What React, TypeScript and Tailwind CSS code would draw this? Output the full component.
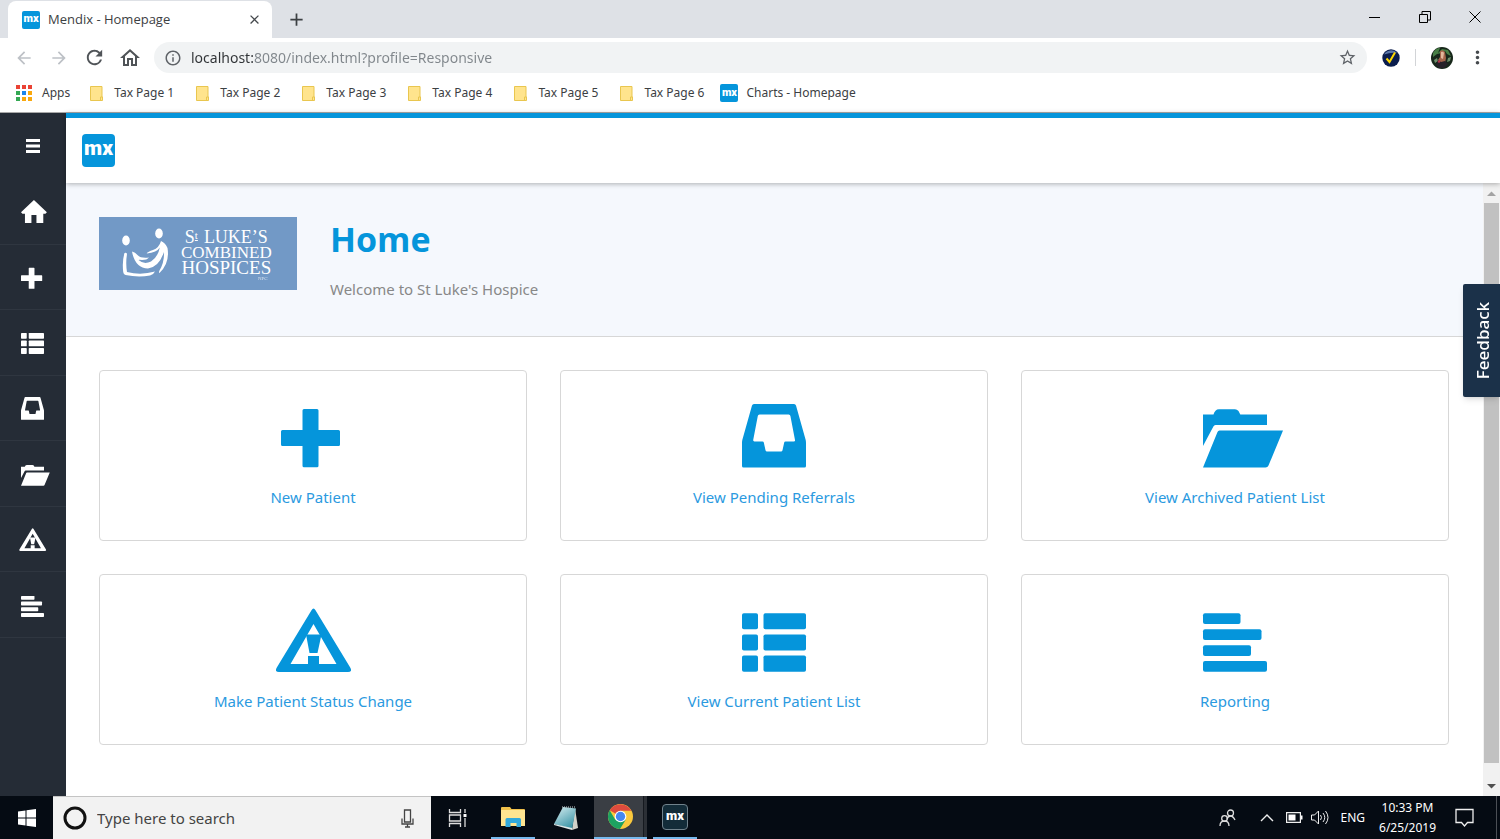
import type { ReactNode } from "react";
import {
  MdAdd,
  MdArrowBack,
  MdArrowForward,
  MdClose,
  MdInfoOutline,
  MdMoreVert,
  MdOutlineHome,
  MdRefresh,
  MdStarBorder,
} from "react-icons/md";

type GlyphName = "home" | "plus" | "list" | "inbox" | "folder" | "warning" | "report";

const glyphs: Record<GlyphName, ReactNode> = {
  home: <path d="M36 0 L72 34 L68 38 H62 V64 H43 V42 H29 V64 H11 V38 H4 L0 34 Z" />,
  plus: (
    <path d="M23 5h13q1.500 0 1.500 1.500V26H57.500q1.500 0 1.500 1.500v13q0 1.500-1.500 1.500H37.500v19.800q0 1.500-1.500 1.500H23q-1.500 0-1.500-1.500V42H1.500Q0 42 0 40.500v-13Q0 26 1.500 26h20V6.500Q21.500 5 23 5z" />
  ),
  list: (
    <>
      <rect x="0" y="5.300" width="16" height="16" rx="1.800" />
      <rect x="21.500" y="5.300" width="42.500" height="16" rx="1.800" />
      <rect x="0" y="26.400" width="16" height="16.200" rx="1.800" />
      <rect x="21.500" y="26.400" width="42.500" height="16.200" rx="1.800" />
      <rect x="0" y="47.500" width="16" height="16.200" rx="1.800" />
      <rect x="21.500" y="47.500" width="42.500" height="16.200" rx="1.800" />
    </>
  ),
  inbox: (
    <path
      fillRule="evenodd"
      d="M12 0H52Q53.500 0 54 1.500L63.700 36Q64 37.500 64 39V62Q64 63.500 62.500 63.500H1.500Q0 63.500 0 62V39Q0 37.500 .3 36L10 1.500Q10.500 0 12 0zM17.500 10.500Q16 10.500 15.800 12L11.200 36Q11 37.400 12.400 37.400H20.500Q21.600 37.400 21.800 38.500L23.500 46.300Q23.800 47.500 25 47.500H39Q40.200 47.500 40.500 46.300L42.200 38.500Q42.400 37.400 43.500 37.400H51.800Q53.300 37.400 53 36L48.400 12Q48.200 10.500 46.700 10.500z"
    />
  ),
  folder: (
    <>
      <path d="M0 10.500H10.500Q11 8.500 12.500 6.700Q14 5.300 16 5.300H32Q34 5.300 35.500 7L37.300 10.500H64V21H12.500Q11 21 10.400 22.500L0 42z" />
      <path d="M16.500 26.500H80L65.500 61.500Q64.700 63.500 62.500 63.500H0L14.500 28Q15 26.500 16.500 26.500z" />
    </>
  ),
  warning: (
    <>
      <path
        fillRule="evenodd"
        d="M30.500 2.200Q32.500-1.200 34.500 2.200L69.500 60Q71.500 64 67 64H-2Q-6.500 64-4.500 60zM32.500 16L9.500 56H55.500z"
      />
      <path d="M25 26.500H40.500L36.500 45H28.500z" />
      <rect x="27" y="48" width="11" height="11" />
    </>
  ),
  report: (
    <>
      <rect x="0" y="5.300" width="37.500" height="10.800" rx="2" />
      <rect x="0" y="21.200" width="58.500" height="10.800" rx="2" />
      <rect x="0" y="37.200" width="48" height="10.800" rx="2" />
      <rect x="0" y="53" width="64" height="10.800" rx="2" />
    </>
  ),
};

function Glyph({ name, className }: { name: GlyphName; className: string }) {
  return (
    <svg viewBox="0 0 64 64" fill="currentColor" aria-hidden="true" className={`overflow-visible ${className}`}>
      {glyphs[name]}
    </svg>
  );
}

function MxBadge({ className }: { className: string }) {
  return (
    <span
      className={`flex shrink-0 items-center justify-center bg-[#0595db] font-['Roboto',sans-serif] leading-none font-black text-white ${className}`}
    >
      mx
    </span>
  );
}

function TabStrip() {
  return (
    <header className="flex h-[38px] items-end bg-[#dee1e6] pl-2">
      <div className="flex h-[37px] w-[264px] items-center rounded-t-lg bg-white pr-2.5 pl-3.5">
        <MxBadge className="size-[18px] rounded-xs pb-0.5 text-[11px]" />
        <span className="ml-2 flex-1 font-['Open_Sans',sans-serif] text-[13px] text-[#3c4043]">Mendix - Homepage</span>
        <button aria-label="Close tab" className="text-[#45494d]">
          <MdClose size={15} />
        </button>
      </div>
      <button aria-label="New tab" className="ml-3.5 flex h-[37px] items-center text-[#3c4043]">
        <MdAdd size={21} />
      </button>
      <div className="ml-auto flex h-[33px] self-start text-black">
        <button aria-label="Minimize" className="flex w-[50px] items-center justify-center">
          <svg width="12" height="12" stroke="currentColor"><path d="M0 6.500h11" /></svg>
        </button>
        <button aria-label="Restore" className="flex w-[50px] items-center justify-center">
          <svg width="12" height="12" fill="none" stroke="currentColor">
            <path d="M.5 3.500h8v8h-8zM3 3V.5h8.500v8.500H9" />
          </svg>
        </button>
        <button aria-label="Close window" className="flex w-[50px] items-center justify-center">
          <svg width="12" height="12" stroke="currentColor"><path d="M.5.5l11 11M11.500.5l-11 11" /></svg>
        </button>
      </div>
    </header>
  );
}

function Toolbar() {
  return (
    <div className="flex h-[39px] items-center bg-white pl-3.5">
      <button aria-label="Back" className="mr-[15px] text-[#bdc1c6]"><MdArrowBack size={20} /></button>
      <button aria-label="Forward" className="mr-3.5 text-[#bdc1c6]"><MdArrowForward size={20} /></button>
      <button aria-label="Reload" className="mr-3 text-[#505458]"><MdRefresh size={23} /></button>
      <button aria-label="Home" className="mr-3 text-[#505458]"><MdOutlineHome size={24} /></button>
      <div className="flex h-[31px] flex-1 items-center rounded-full bg-[#f1f3f4] px-2.5">
        <MdInfoOutline size={18} className="text-[#5f6368]" />
        <input
          aria-label="Address"
          defaultValue="localhost:8080/index.html?profile=Responsive"
          className="ml-[9px] flex-1 bg-[linear-gradient(to_right,#303336_62px,#80868b_62px)] bg-clip-text text-[14px] text-transparent outline-none"
        />
        <button aria-label="Bookmark this page" className="text-[#5f6368]"><MdStarBorder size={19} /></button>
      </div>
      <button aria-label="Task checker" className="ml-[15px]">
        <svg width="18" height="18" viewBox="0 0 18 18">
          <circle cx="9" cy="9" r="8.700" fill="#0b1d4d" />
          <path d="M2 5.500A8 8 0 0 1 15 4Q9 3 2 5.500z" fill="#5c77a8" />
          <path d="M4.500 9.500l3 3.500 5.500-9.500" fill="none" stroke="#ffd800" strokeWidth="2" />
        </svg>
      </button>
      <span className="mx-[15px] h-[17px] w-px bg-[#d2d4d7]" />
      <button aria-label="Profile">
        <svg width="22" height="22" viewBox="0 0 22 22">
          <circle cx="11" cy="11" r="11" fill="#17271a" />
          <path d="M2 6Q5 1 9 1L7 6l4-4 6 1 3 6-4-2-2-3-3 2-5 1-4 3z" fill="#477f45" />
          <path d="M3 13l3-2 1 3-3 2zM17 11l3-1-1 4-3 1z" fill="#6d8f6c" />
          <path d="M9 4q3-2 5 1l1 6-1 5H9l-2-3 2-3z" fill="#a5654b" />
          <path d="M10 5q2-1 3 1l-1 6-2-1z" fill="#e2b79c" />
          <path d="M7 13l3 2 4-1 3 3-4 4H8l-3-3z" fill="#262129" />
          <circle cx="8" cy="14.500" r="1.200" fill="#b8344a" />
        </svg>
      </button>
      <button aria-label="Browser menu" className="mr-3 ml-3.5 text-[#45494d]"><MdMoreVert size={21} /></button>
    </div>
  );
}

const folders = ["Tax Page 1", "Tax Page 2", "Tax Page 3", "Tax Page 4", "Tax Page 5", "Tax Page 6"];

const appDots = [
  "bg-[#ea4335]", "bg-[#ea4335]", "bg-[#ea4335]",
  "bg-[#34a853]", "bg-[#1a85ee]", "bg-[#f9a80d]",
  "bg-[#34a853]", "bg-[#f9a80d]", "bg-[#f9a80d]",
];

function Bookmarks() {
  return (
    <nav className="flex h-9 items-center border-b border-[#a9a9a9] bg-white pb-[3px] pl-4 text-[12px] text-[#3c4043]">
      <a href="#apps" className="mr-5 flex items-center gap-2.5">
        <span className="grid grid-cols-3 gap-0.5">
          {appDots.map((color, i) => (
            <span key={i} className={`size-1 ${color}`} />
          ))}
        </span>
        Apps
      </a>
      <div className="mr-4 flex gap-[22px]">
        {folders.map((name) => (
          <a key={name} href="#folder" className="flex shrink-0 items-center gap-[11px] whitespace-nowrap">
            <svg width="13" height="15" viewBox="0 0 13 15">
              <path d="M.5.5h11.500v10.500h.5v3.500H.5z" fill="#ffe48d" stroke="#e9c64f" />
              <path d="M10.500 14.500V11h1.800" fill="none" stroke="#e9c64f" />
            </svg>
            {name}
          </a>
        ))}
      </div>
      <a href="#charts" className="flex items-center gap-2 whitespace-nowrap">
        <MxBadge className="size-[18px] rounded-xs pb-0.5 text-[11px]" />
        Charts - Homepage
      </a>
    </nav>
  );
}

const sideItems: { label: string; icon: GlyphName }[] = [
  { label: "Home", icon: "home" },
  { label: "New Patient", icon: "plus" },
  { label: "View Current Patient List", icon: "list" },
  { label: "View Pending Referrals", icon: "inbox" },
  { label: "View Archived Patient List", icon: "folder" },
  { label: "Make Patient Status Change", icon: "warning" },
  { label: "Reporting", icon: "report" },
];

function Sidebar() {
  return (
    <aside className="w-[66px] shrink-0 bg-[#252c36] text-white">
      <button aria-label="Toggle menu" className="flex h-[66px] w-full items-center justify-center">
        <svg width="14" height="14" fill="currentColor">
          <path d="M0 0h14v3H0zM0 5.500h14v3H0zM0 11h14v3H0z" />
        </svg>
      </button>
      <nav className="grid h-[459px] grid-rows-7">
        {sideItems.map((item) => (
          <a
            key={item.label}
            href="#page"
            aria-label={item.label}
            className="flex items-center border-b border-[#2f3640] pt-px pl-[21px]"
          >
            <Glyph name={item.icon} className="size-[23px]" />
          </a>
        ))}
      </nav>
    </aside>
  );
}

function HospiceLogo() {
  return (
    <div className="flex h-[73px] w-[198px] shrink-0 items-center bg-[#7299c6] pl-[22px] text-white">
      <svg width="48" height="52" viewBox="0 0 48 52" fill="currentColor">
        <ellipse cx="5" cy="12.500" rx="3.800" ry="5" />
        <ellipse cx="38" cy="5.500" rx="3.800" ry="5" />
        <path d="M3.500 25Q5.500 24 6 26Q4.500 35 6 44Q20 47.500 34 43.500Q33 46 29 47.500Q17 49.500 4.500 47Q2.500 46.500 2.200 44Q1 33 3.500 25z" />
        <path d="M11 23.500Q14 24 17 27.500Q20 30.500 28 29.500Q26 32 21 32Q18 31.500 17.500 32Q23 37 30 33.500Q37 29 38.800 19.500Q36 24.500 25.500 25.500Q27 23.500 32 22Q38 20 40 13Q44.500 15 46.500 20Q49 35 38.500 45Q37.500 44.500 38.500 42.500Q43.500 34 43 24Q38 39 27 40.500Q14 40 11 23.500z" />
      </svg>
      <div className="ml-3 flex flex-col items-center pt-1 font-['Liberation_Serif',serif] text-[17px] leading-[15px]">
        <span className="flex gap-1.5 text-[18px]">
          <span className="flex">
            S<span className="text-[11px] leading-[11px] underline">t</span>
          </span>
          LUKE’S
        </span>
        <span>COMBINED</span>
        <span className="text-[19px] leading-4">HOSPICES</span>
        <span className="self-end pr-1 text-[5px] leading-[5px] opacity-70">NPC</span>
      </div>
    </div>
  );
}

const cards: { label: string; icon: GlyphName }[] = [
  { label: "New Patient", icon: "plus" },
  { label: "View Pending Referrals", icon: "inbox" },
  { label: "View Archived Patient List", icon: "folder" },
  { label: "Make Patient Status Change", icon: "warning" },
  { label: "View Current Patient List", icon: "list" },
  { label: "Reporting", icon: "report" },
];

function Scrollbar() {
  return (
    <div className="flex w-[17px] shrink-0 flex-col items-center bg-[#f1f1f1]">
      <svg width="9" height="20" fill="#a3a3a3"><path d="M0 13l4.500-4.500L9 13z" /></svg>
      <div className="w-[15px] flex-1 bg-[#c1c1c1]" />
      <svg width="9" height="33" fill="#505050"><path d="M0 21h9l-4.500 4.500z" /></svg>
    </div>
  );
}

function HomePage() {
  return (
    <div className="flex min-w-0 flex-1 flex-col bg-white">
      <div className="relative flex h-[70px] items-center border-t-5 border-[#0595db] bg-white pl-4 shadow-[0_1px_5px_rgba(0,0,0,0.3)]">
        <MxBadge className="size-[33px] rounded-sm pb-1 text-[21px]" />
      </div>
      <div className="flex flex-1">
        <main className="min-w-0 flex-1">
          <section className="flex h-[154px] gap-[33px] border-b border-[#d7d7d7] bg-[#f5f8fd] px-[33px] pt-[34px]">
            <HospiceLogo />
            <div>
              <h1 className="font-['Open_Sans',sans-serif] text-[34px] leading-[44px] font-bold text-[#0595db]">Home</h1>
              <p className="mt-[17px] text-[15px] leading-[22px] text-[#888]">Welcome to St Luke's Hospice</p>
            </div>
          </section>
          <section className="grid grid-cols-3 gap-[33px] py-[33px] pr-[34px] pl-[33px]">
            {cards.map((card) => (
              <a
                key={card.label}
                href="#page"
                className="flex h-[171px] flex-col items-center rounded-sm border border-[#d7d7d7] pt-[33px] text-[#0595db]"
              >
                <Glyph name={card.icon} className="size-16" />
                <span className="mt-[18px] text-[15px] leading-[22px] text-[#2b9adf]">{card.label}</span>
              </a>
            ))}
          </section>
        </main>
        <Scrollbar />
      </div>
    </div>
  );
}

function TaskbarApps() {
  return (
    <div className="flex">
      <button aria-label="Task view" className="flex w-[53px] items-center justify-center">
        <svg width="19" height="18" fill="none" stroke="#ddd" strokeWidth="1.300">
          <path d="M1.500 0v3.500h11V0M1.500 18v-3.500h11V18M1.500 6h11v6h-11zM17 0v4M17 9v9" />
          <path d="M15.500 5h3v3h-3z" fill="#fff" stroke="none" />
        </svg>
      </button>
      <button aria-label="File Explorer" className="mx-[7px] flex w-11 items-center justify-center border-b-2 border-[#76b9ed]">
        <svg width="24" height="20" viewBox="0 0 24 20">
          <path d="M0 1q0-1 1-1h8l1.500 2H23q1 0 1 1v16H0z" fill="#f0c14b" />
          <path d="M0 3h24v16H0z" fill="#ffe591" />
          <path d="M4.500 20v-7.500q0-1.500 1.500-1.500h12.500q1.500 0 1.500 1.500V20h-4.500v-4h-6v4z" fill="#32a9dc" />
        </svg>
      </button>
      <button aria-label="Notepad" className="flex w-[52px] items-center justify-center pr-1">
        <svg width="26" height="24" viewBox="0 0 26 24">
          <defs>
            <linearGradient id="note" x1="0" y1="0" x2=".6" y2="1">
              <stop offset="0" stopColor="#d9eff2" />
              <stop offset="1" stopColor="#3f97a8" />
            </linearGradient>
          </defs>
          <path d="M22 2l3 20-6 2z" fill="#d2d2c9" />
          <path d="M10 1l13 1.500L19 23 1 18z" fill="url(#note)" />
          <path d="M1 18l18 4V24L1 19z" fill="#dfe8e8" />
          <path d="M9 1h14" stroke="#cfd5d5" strokeDasharray="1 1" />
        </svg>
      </button>
      <button
        aria-label="Chrome"
        className="flex w-[53px] items-center justify-center border-b-2 border-[#76b9ed] bg-[linear-gradient(to_right,#3a3e44_49px,#15191f_49px,#15191f_50px,#2b2f35_50px)]"
      >
        <svg width="25" height="25" viewBox="0 0 24 24">
          <circle cx="12" cy="12" r="12" fill="#fbc93d" />
          <path d="M12 12L1.600 6A12 12 0 0 1 22.400 6.500H12z" fill="#dd4b3e" />
          <path d="M1.600 6A12 12 0 0 0 11.500 24L17 15 12 12 7 15z" fill="#1da261" />
          <circle cx="12" cy="12" r="5.600" fill="#fff" />
          <circle cx="12" cy="12" r="4.500" fill="#4688f1" />
        </svg>
      </button>
      <button aria-label="Mendix" className="ml-1.5 flex w-11 items-center justify-center border-b-2 border-[#76b9ed]">
        <span className="flex size-[26px] items-center justify-center rounded-sm border border-[#71828c] bg-[#132c39] pb-0.5 font-['Roboto',sans-serif] text-[13px] leading-none font-black text-white">
          mx
        </span>
      </button>
    </div>
  );
}

function Taskbar() {
  return (
    <footer className="flex h-[43px] bg-[#050b13] text-white">
      <button aria-label="Start" className="flex w-[53px] items-center justify-center">
        <svg width="18" height="18" fill="#fff">
          <path d="M0 2.500L7.500 1.500V8.500H0zM8.500 1.300L18 0v8.500H8.500zM0 9.500h7.500v7L0 15.500zM8.500 9.500H18V18l-9.500-1.300z" />
        </svg>
      </button>
      <label className="flex w-[378px] items-center border-t border-[#c4c4c4] bg-[#f2f2f2] pr-4 pl-2.5">
        <svg width="24" height="24"><circle cx="12" cy="12" r="10" fill="none" stroke="#111" strokeWidth="3" /></svg>
        <input
          aria-label="Search"
          placeholder="Type here to search"
          className="ml-2.5 min-w-0 flex-1 text-[15px] text-[#333] outline-none placeholder:text-[#444]"
        />
        <svg width="14" height="19" fill="none" stroke="#444" strokeWidth="1.300">
          <path d="M3.500 1h6v12h-6zM1 9.500V15h11V9.500M6.500 15v3M4 18h5" />
        </svg>
      </label>
      <TaskbarApps />
      <div className="ml-auto flex items-center">
        <button aria-label="People">
          <svg width="17" height="18" fill="none" stroke="#ddd" strokeWidth="1.300">
            <circle cx="11.500" cy="4" r="3" />
            <path d="M8 10q1-3 3.500-3T16 11" />
            <circle cx="5.500" cy="9.500" r="2.800" />
            <path d="M1 17q0-5 4.500-5t4.500 5" />
          </svg>
        </button>
        <button aria-label="Show hidden icons" className="ml-6">
          <svg width="14" height="8" fill="none" stroke="#eee" strokeWidth="1.400"><path d="M1 7l6-6 6 6" /></svg>
        </button>
        <svg width="17" height="11" className="ml-3" aria-label="Battery">
          <path d="M.6.6h13.800v9.800H.6z" fill="none" stroke="#eee" strokeWidth="1.200" />
          <path d="M2.500 2.500h7v6h-7zM15 3.500h1.500v4H15z" fill="#fff" />
        </svg>
        <svg width="19" height="15" className="ml-2" fill="none" stroke="#eee" aria-label="Volume">
          <path d="M.5 5h3L7.500 1v13l-4-4h-3zM9.500 5q2 2.500 0 5M12 3q3.500 4.500 0 9M14.500 1q5 6.500 0 13" />
        </svg>
        <span className="ml-2.5 text-[12px]">ENG</span>
        <time className="ml-3.5 text-center text-[12px] leading-5">
          10:33 PM
          <br />
          6/25/2019
        </time>
        <button aria-label="Notifications" className="ml-[19px]">
          <svg width="19" height="19" fill="none" stroke="#eee" strokeWidth="1.300">
            <path d="M1 1.500h17v13h-5.500L9.500 18l-3-3.500H1z" />
          </svg>
        </button>
        <span className="ml-[22px] h-full w-1 border-l border-[#4b4f55]" />
      </div>
    </footer>
  );
}

export default function App() {
  return (
    <div className="relative flex min-h-screen flex-col bg-white font-['Noto_Sans','Open_Sans',sans-serif]">
      <TabStrip />
      <Toolbar />
      <Bookmarks />
      <div className="flex flex-1">
        <Sidebar />
        <HomePage />
      </div>
      <Taskbar />
      <button className="absolute top-[284px] right-0 flex h-[113px] w-[37px] items-center justify-center rounded-l-xs bg-[#1b3149] pl-0.5 text-white shadow-md">
        <span className="rotate-180 text-[17px] font-medium [writing-mode:vertical-rl]">Feedback</span>
      </button>
    </div>
  );
}
